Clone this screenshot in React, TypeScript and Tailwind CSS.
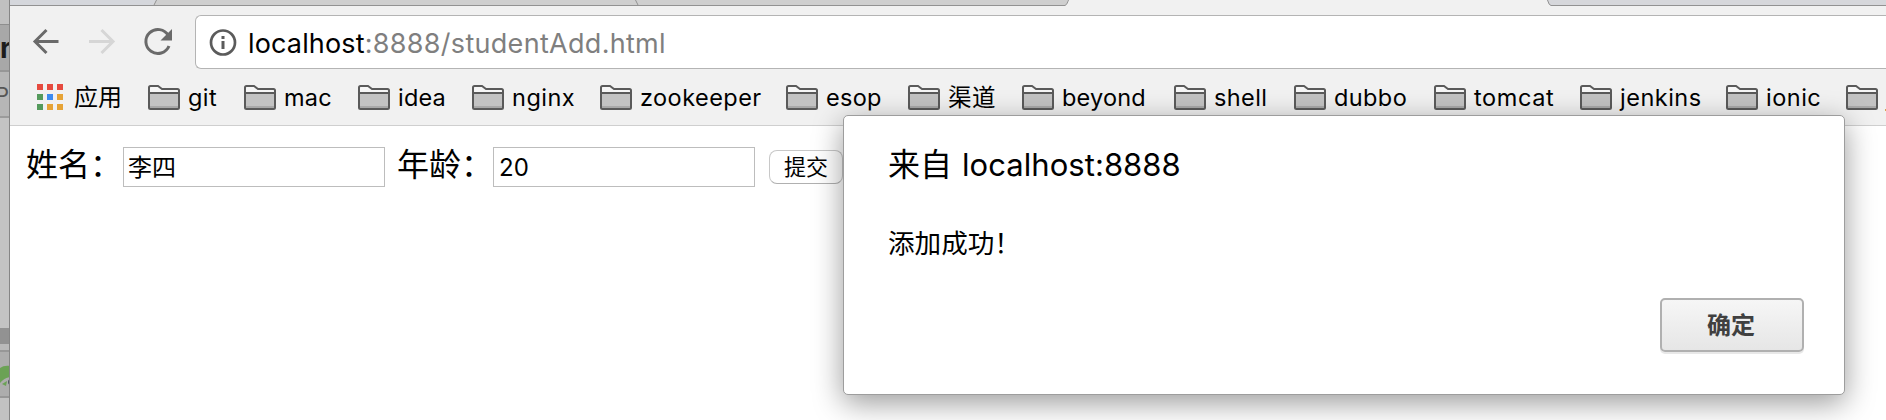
import React from "react";

type Bookmark = { label: string; box: string; text: string };

const bookmarks: Bookmark[] = [
  { label: "git", box: "w-[96px]", text: "tracking-[0.4px]" },
  { label: "mac", box: "w-[114px]", text: "tracking-[0.2px]" },
  { label: "idea", box: "w-[114px]", text: "tracking-[0.2px]" },
  { label: "nginx", box: "w-[128px]", text: "tracking-[0.5px]" },
  { label: "zookeeper", box: "w-[186px]", text: "tracking-[0.45px]" },
  { label: "esop", box: "w-[122px]", text: "tracking-[0.3px]" },
  { label: "渠道", box: "w-[114px]", text: "tracking-[0.5px]" },
  { label: "beyond", box: "w-[152px]", text: "tracking-[0.2px]" },
  { label: "shell", box: "w-[120px]", text: "tracking-[0.4px]" },
  { label: "dubbo", box: "w-[140px]", text: "tracking-[0.4px]" },
  { label: "tomcat", box: "w-[146px]", text: "tracking-[0.6px]" },
  { label: "jenkins", box: "w-[146px]", text: "tracking-[0.5px]" },
  { label: "ionic", box: "w-[120px]", text: "tracking-[0.5px]" },
  { label: "j", box: "w-[60px]", text: "tracking-[0px]" },
];

const appColors = [
  "bg-[#e64a3f]", "bg-[#e64a3f]", "bg-[#e64a3f]",
  "bg-[#549a5c]", "bg-[#3c8bf0]", "bg-[#e6a336]",
  "bg-[#549a5c]", "bg-[#e6a336]", "bg-[#e6a336]",
];

function Folder() {
  return (
    <svg width="32" height="26" viewBox="0 0 32 26" className="block shrink-0">
      <path d="M1 23.5V2.5Q1 1 2.5 1H10.5L14.5 4H29.5Q31 4 31 5.5V23.5Q31 24 29.5 24H2.5Q1 24 1 23.5Z" fill="#f6f6f6" />
      <path d="M2 8H30V23H2Z" fill="#c3c3c3" />
      <path d="M2 21H30V23H2Z" fill="#a9a9a9" />
      <path d="M1 8H31" stroke="#5a5a5a" strokeWidth="2" />
      <path d="M1 22.5V2.5Q1 1 2.5 1H10L14 4H29.5Q31 4 31 5.5V22.5Q31 24 29.5 24H2.5Q1 24 1 22.5Z" fill="none" stroke="#5a5a5a" strokeWidth="2" />
    </svg>
  );
}

function TabStrip() {
  return (
    <svg width="1876" height="6" viewBox="0 0 1876 6" className="block shrink-0">
      <rect width="1876" height="6" fill="#f1f1f1" />
      <path d="M0 0H146L143 5H0Z" fill="#d5d7dc" />
      <path d="M146 0H1058L1056 5.5H143Z" fill="#cfcfcf" />
      <path d="M1537 0H1876V5.5H1540Z" fill="#d6d7db" />
      <path d="M0 5.5H1055Q1057 5 1058.500 0M1537.500 0Q1539 5.500 1541 5.500H1876M146.500 0L144 5M625.500 0L628 5" fill="none" stroke="#929292" />
    </svg>
  );
}

export default function App() {
  return (
    <div className="relative flex h-[420px] w-[1886px] overflow-hidden bg-white font-['Inter','Noto_Sans_CJK_SC',sans-serif] text-black">
      <aside className="flex h-full w-[10px] shrink-0 flex-col overflow-hidden border-r border-[#858585] bg-[#c2c2c2]">
        <div className="h-[24px] shrink-0 bg-[#c0c0c0]" />
        <div className="h-[48px] shrink-0 border-t border-b-2 border-t-[#8e8e8e] border-b-[#969696] bg-[#a8a8a8] text-[28px] leading-[46px] font-bold text-[#1c1c1c]">r</div>
        <div className="h-[46px] shrink-0 border-b-2 border-[#9b9b9b] bg-[#b6b6b6] text-[22px] leading-[46px] text-[#555]"><span className="-ml-[5px]">P</span></div>
        <div className="h-[210px] shrink-0 bg-[#c3c3c3]" />
        <div className="h-[16px] shrink-0 bg-[#929292]" />
        <div className="h-[6px] shrink-0 bg-[#bababa]" />
        <div className="h-[48px] shrink-0 border-y-2 border-[#979797] bg-[#adadad]">
          <svg width="10" height="44" viewBox="0 0 10 44">
            <path d="M0 16Q4 13 10 14V25Q4 26 0 31Z" fill="#6ba255" />
            <path d="M2 32L7 29L6 34Z" fill="#6ba255" />
            <circle cx="11" cy="30" r="3" fill="#4a5260" />
          </svg>
        </div>
      </aside>

      <div className="flex min-w-0 flex-1 flex-col">
        <TabStrip />
        <div className="flex h-[120px] shrink-0 flex-col border-b border-[#cfcfcf] bg-[#f1f1f1]">
          <div className="flex h-[72px] shrink-0 pt-[9px]">
            <svg width="185" height="54" viewBox="10 15 185 54" className="block shrink-0" fill="none">
              <path d="M58.500 41.500H35M46.500 30L35 41.500L46.500 53" stroke="#6a6a6a" strokeWidth="3" />
              <path d="M89 41.500H113M101.500 30L113 41.500L101.500 53" stroke="#d6d6d6" strokeWidth="3" />
              <path d="M168.300 35.500A12 12 0 1 0 169 46" stroke="#6a6a6a" strokeWidth="3" />
              <path d="M172 29V40.500H160.500Z" fill="#6a6a6a" />
            </svg>
            <div className="flex h-[54px] flex-1 items-center rounded-l-[6px] border border-r-0 border-[#b4b4b4] bg-white pl-[13px]">
              <svg width="28" height="28" viewBox="0 0 28 28" fill="none" className="shrink-0">
                <circle cx="14" cy="14.500" r="12" stroke="#5b5b5b" strokeWidth="2.700" />
                <path d="M14 8V11M14 13V21" stroke="#5b5b5b" strokeWidth="3" />
              </svg>
              <div className="ml-[11px] pt-[3px] text-[27px] leading-[40px] tracking-[0.3px] whitespace-nowrap text-[#7f7f7f]">
                <span className="tracking-[0.15px] text-black">localhost</span>:8888/studentAdd.html
              </div>
            </div>
          </div>
          <div className="flex h-[40px] items-center overflow-hidden pl-[27px] text-[23.5px] leading-[36px]">
            <div className="flex w-[111px] shrink-0 items-center">
              <div className="grid -translate-y-px grid-cols-3 gap-1">
                {appColors.map((c, i) => <i key={i} className={"block size-[6px] " + c} />)}
              </div>
              <span className="ml-[11px] text-[24px]">应用</span>
            </div>
            {bookmarks.map((b) => (
              <div key={b.label} className={"flex shrink-0 items-center gap-2 whitespace-nowrap " + b.box}>
                <Folder />
                <span className={b.text}>{b.label}</span>
              </div>
            ))}
          </div>
        </div>

        <main className="flex items-start pt-[21px] pl-4">
          <label className="w-[97px] pt-px text-[32px] leading-[34px] whitespace-nowrap">姓名：</label>
          <div className="h-[40px] w-[262px] border border-[#bdbdbd] pl-1 text-[24px] leading-[40px]">李四</div>
          <label className="ml-[12px] w-[96px] pt-px text-[32px] leading-[34px] whitespace-nowrap">年龄：</label>
          <div className="h-[40px] w-[262px] border border-[#bdbdbd] pl-[5px] text-[24px] leading-[40px]">20</div>
          <button className="mt-[3px] ml-[14px] h-[34px] w-[74px] rounded-[8px] border border-[#c8c8c8] border-b-[#b0b0b0] bg-white text-[22px] leading-[33px]">提交</button>
        </main>
      </div>

      <section className="absolute top-[115px] left-[843px] flex h-[280px] w-[1002px] flex-col rounded-[5px] border border-[#9d9d9d] bg-white pl-[44px] shadow-[0_8px_30px_rgba(0,0,0,0.4)]">
        <h1 className="mt-[28px] text-[31px] leading-[42px] whitespace-nowrap"><span className="text-[32px]">来自</span><span className="ml-[10px] tracking-[0.05px]">localhost:8888</span></h1>
        <p className="mt-[38px] text-[26.6px] leading-[38px]">添加成功！</p>
        <button className="mt-[36px] mr-[40px] h-[54px] w-[144px] self-end rounded-[5px] border-2 border-[#b0b0b0] bg-linear-to-b from-[#f6f6f6] to-[#e6e6e6] pr-[2px] text-[24px] leading-[52px] font-bold text-[#404040] shadow-[0_2px_0_#e8e8e8]">确定</button>
      </section>
    </div>
  );
}
